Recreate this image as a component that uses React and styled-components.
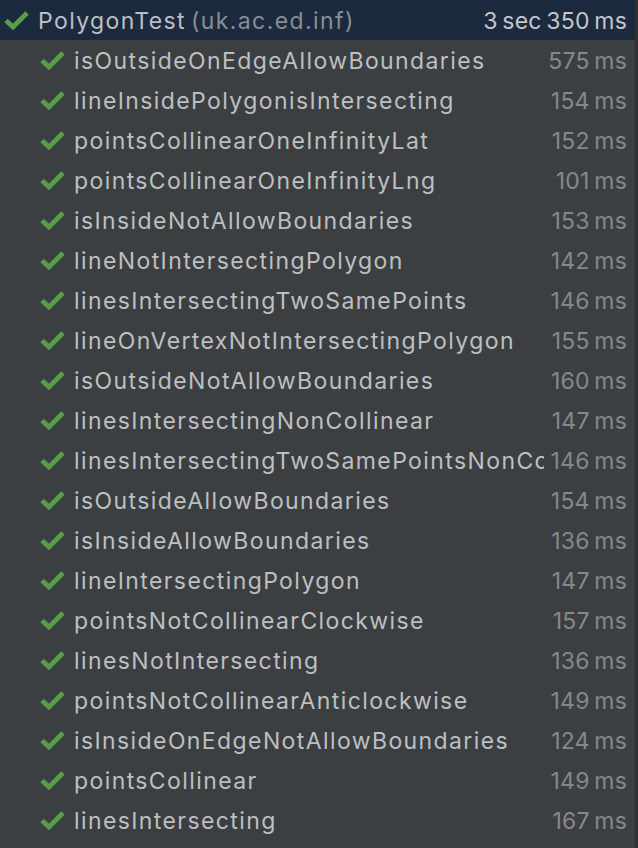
import React from 'react';
import styled, { createGlobalStyle } from 'styled-components';

const GlobalStyle = createGlobalStyle`
  html, body {
    margin: 0;
    padding: 0;
    background: #3c3f41;
  }
  body {
    font-family: Inter, "Open Sans", "Liberation Sans", sans-serif;
  }
`;

const Panel = styled.div`
  width: 638px;
  height: 848px;
  background: #3c3f41;
  box-sizing: border-box;
  border-right: 3px solid #2f3133;
  overflow: hidden;
`;

const Row = styled.div`
  display: flex;
  align-items: center;
  height: 40px;
  box-sizing: border-box;
  padding-top: 2px;
  padding-left: ${p => (p.$root ? '4px' : '40px')};
  padding-right: 8px;
  background: ${p => (p.$root ? '#1c2a40' : 'transparent')};
  font-size: 23px;
`;

const Check = styled.svg`
  flex: none;
  width: 25px;
  height: 20px;
  margin-right: 9px;
  margin-top: -2px;
`;

const Name = styled.div`
  flex: 1;
  min-width: 0;
  white-space: nowrap;
  overflow: hidden;
  color: #bdbfc1;
  letter-spacing: 1.4px;
`;

const Pkg = styled.span`
  color: #8a8e92;
  margin-left: 5px;
`;

const Time = styled.div`
  flex: none;
  min-width: 80px;
  text-align: right;
  white-space: nowrap;
  color: ${p => (p.$root ? '#c4c6c8' : '#85888b')};
  margin-left: 3px;
  letter-spacing: 0.2px;
  word-spacing: -2px;
`;

const CheckIcon = () => (
  <Check viewBox="0 0 25 20">
    <path d="M2 10.5 L9 17 L23 3" fill="none" stroke="#5a9c47" strokeWidth="4.8" strokeLinecap="butt" strokeLinejoin="miter" />
  </Check>
);

const tests = [
  ['isOutsideOnEdgeAllowBoundaries', '575 ms'],
  ['lineInsidePolygonisIntersecting', '154 ms'],
  ['pointsCollinearOneInfinityLat', '152 ms'],
  ['pointsCollinearOneInfinityLng', '101 ms'],
  ['isInsideNotAllowBoundaries', '153 ms'],
  ['lineNotIntersectingPolygon', '142 ms'],
  ['linesIntersectingTwoSamePoints', '146 ms'],
  ['lineOnVertexNotIntersectingPolygon', '155 ms'],
  ['isOutsideNotAllowBoundaries', '160 ms'],
  ['linesIntersectingNonCollinear', '147 ms'],
  ['linesIntersectingTwoSamePointsNonCollinear', '146 ms'],
  ['isOutsideAllowBoundaries', '154 ms'],
  ['isInsideAllowBoundaries', '136 ms'],
  ['lineIntersectingPolygon', '147 ms'],
  ['pointsNotCollinearClockwise', '157 ms'],
  ['linesNotIntersecting', '136 ms'],
  ['pointsNotCollinearAnticlockwise', '149 ms'],
  ['isInsideOnEdgeNotAllowBoundaries', '124 ms'],
  ['pointsCollinear', '149 ms'],
  ['linesIntersecting', '167 ms'],
];

export default function App() {
  return (
    <>
      <GlobalStyle />
      <Panel>
        <Row $root>
          <CheckIcon />
          <Name>
            PolygonTest<Pkg>(uk.ac.ed.inf)</Pkg>
          </Name>
          <Time $root>3 sec 350 ms</Time>
        </Row>
        {tests.map(([name, time]) => (
          <Row key={name}>
            <CheckIcon />
            <Name>{name}</Name>
            <Time>{time}</Time>
          </Row>
        ))}
      </Panel>
    </>
  );
}
